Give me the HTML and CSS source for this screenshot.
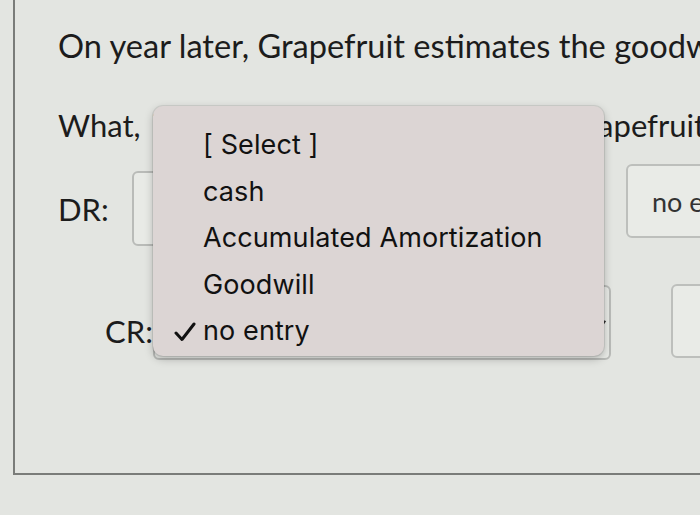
FILE: index.html
```html
<!DOCTYPE html>
<html>
<head>
<meta charset="utf-8">
<link rel="stylesheet" href="styles.css">
</head>
<body>
<div class="panel">
  <p class="heading">On year later, Grapefruit estimates the goodwill has a fair value of</p>
  <p class="question">What, if any, adjusting entry should Grapefruit record?</p>
  <div class="row dr">
    <span class="label">DR:</span>
    <div class="select"></div>
    <div class="amount">no entry</div>
  </div>
  <div class="row cr">
    <span class="label">CR:</span>
    <div class="select"><span class="caret"></span></div>
    <div class="amount"></div>
  </div>
</div>
<div class="menu">
  <div class="item">[ Select ]</div>
  <div class="item">cash</div>
  <div class="item">Accumulated Amortization</div>
  <div class="item">Goodwill</div>
  <div class="item checked"><svg class="check" width="22" height="20" viewBox="0 0 22 20"><path d="M2 11 L8 17.5 L20 2" fill="none" stroke="#111" stroke-width="3" stroke-linecap="round" stroke-linejoin="round"/></svg>no entry</div>
</div>
</body>
</html>
```
FILE: styles.css
```css
html, body {
  margin: 0;
  padding: 0;
}
body {
  width: 700px;
  height: 515px;
  overflow: hidden;
  background: #e3e5e1;
  color: #1c1c1c;
  font-family: Lato, "Open Sans", sans-serif;
  position: relative;
}
.panel {
  margin-left: 13px;
  height: 475px;
  border-left: 2px solid #7a7c79;
  border-bottom: 2px solid #7a7c79;
  padding-left: 43px;
  box-sizing: border-box;
  overflow: hidden;
}
.heading {
  margin: 0;
  padding-top: 26px;
  font-size: 32.6px;
  line-height: 40px;
  white-space: nowrap;
}
.question {
  margin: 0;
  padding-top: 39px;
  font-size: 31px;
  line-height: 40px;
  word-spacing: 3.3px;
  white-space: nowrap;
}
.row {
  display: flex;
  align-items: flex-start;
  font-size: 31px;
}
.label {
  flex: none;
}
.dr {
  margin-top: 26px;
  height: 75px;
}
.dr .label {
  width: 74px;
  padding-top: 19px;
}
.cr {
  margin-top: 39px;
  height: 74px;
  padding-left: 47px;
}
.cr .label {
  width: 48px;
  padding-top: 27px;
}
.select {
  flex: none;
  box-sizing: border-box;
  border: 2px solid #b9bbb8;
  border-radius: 6px;
  background: #e8eae6;
  position: relative;
  width: 458px;
  height: 75px;
}
.amount {
  flex: none;
  box-sizing: border-box;
  border: 2px solid #bdbfbc;
  border-radius: 6px;
  background: #e9ebe7;
  height: 74px;
  width: 120px;
  font-size: 27px;
  padding-left: 24px;
  color: #333;
  display: flex;
  align-items: center;
  white-space: nowrap;
}
.dr .amount {
  margin-left: 36px;
  margin-top: -7px;
}
.cr .amount {
  margin-left: 60px;
  margin-top: -1px;
}
.caret {
  position: absolute;
  right: 5px;
  top: 33px;
  width: 2px;
  height: 8px;
  background: #333;
  transform: rotate(35deg);
}
.menu {
  position: absolute;
  left: 153px;
  top: 106px;
  width: 451px;
  height: 250px;
  box-sizing: border-box;
  padding-top: 18px;
  padding-left: 50px;
  background: #dcd5d4;
  border-radius: 10px;
  box-shadow: 0 3px 8px rgba(0,0,0,0.25), 0 0 0 1px rgba(0,0,0,0.08);
  font-family: Inter, "Liberation Sans", sans-serif;
  font-size: 27px;
  letter-spacing: 0.1px;
  color: #111;
}
.item {
  height: 46.5px;
  line-height: 42px;
  position: relative;
  white-space: nowrap;
}
.check {
  position: absolute;
  left: -29px;
  top: 12px;
}
```
